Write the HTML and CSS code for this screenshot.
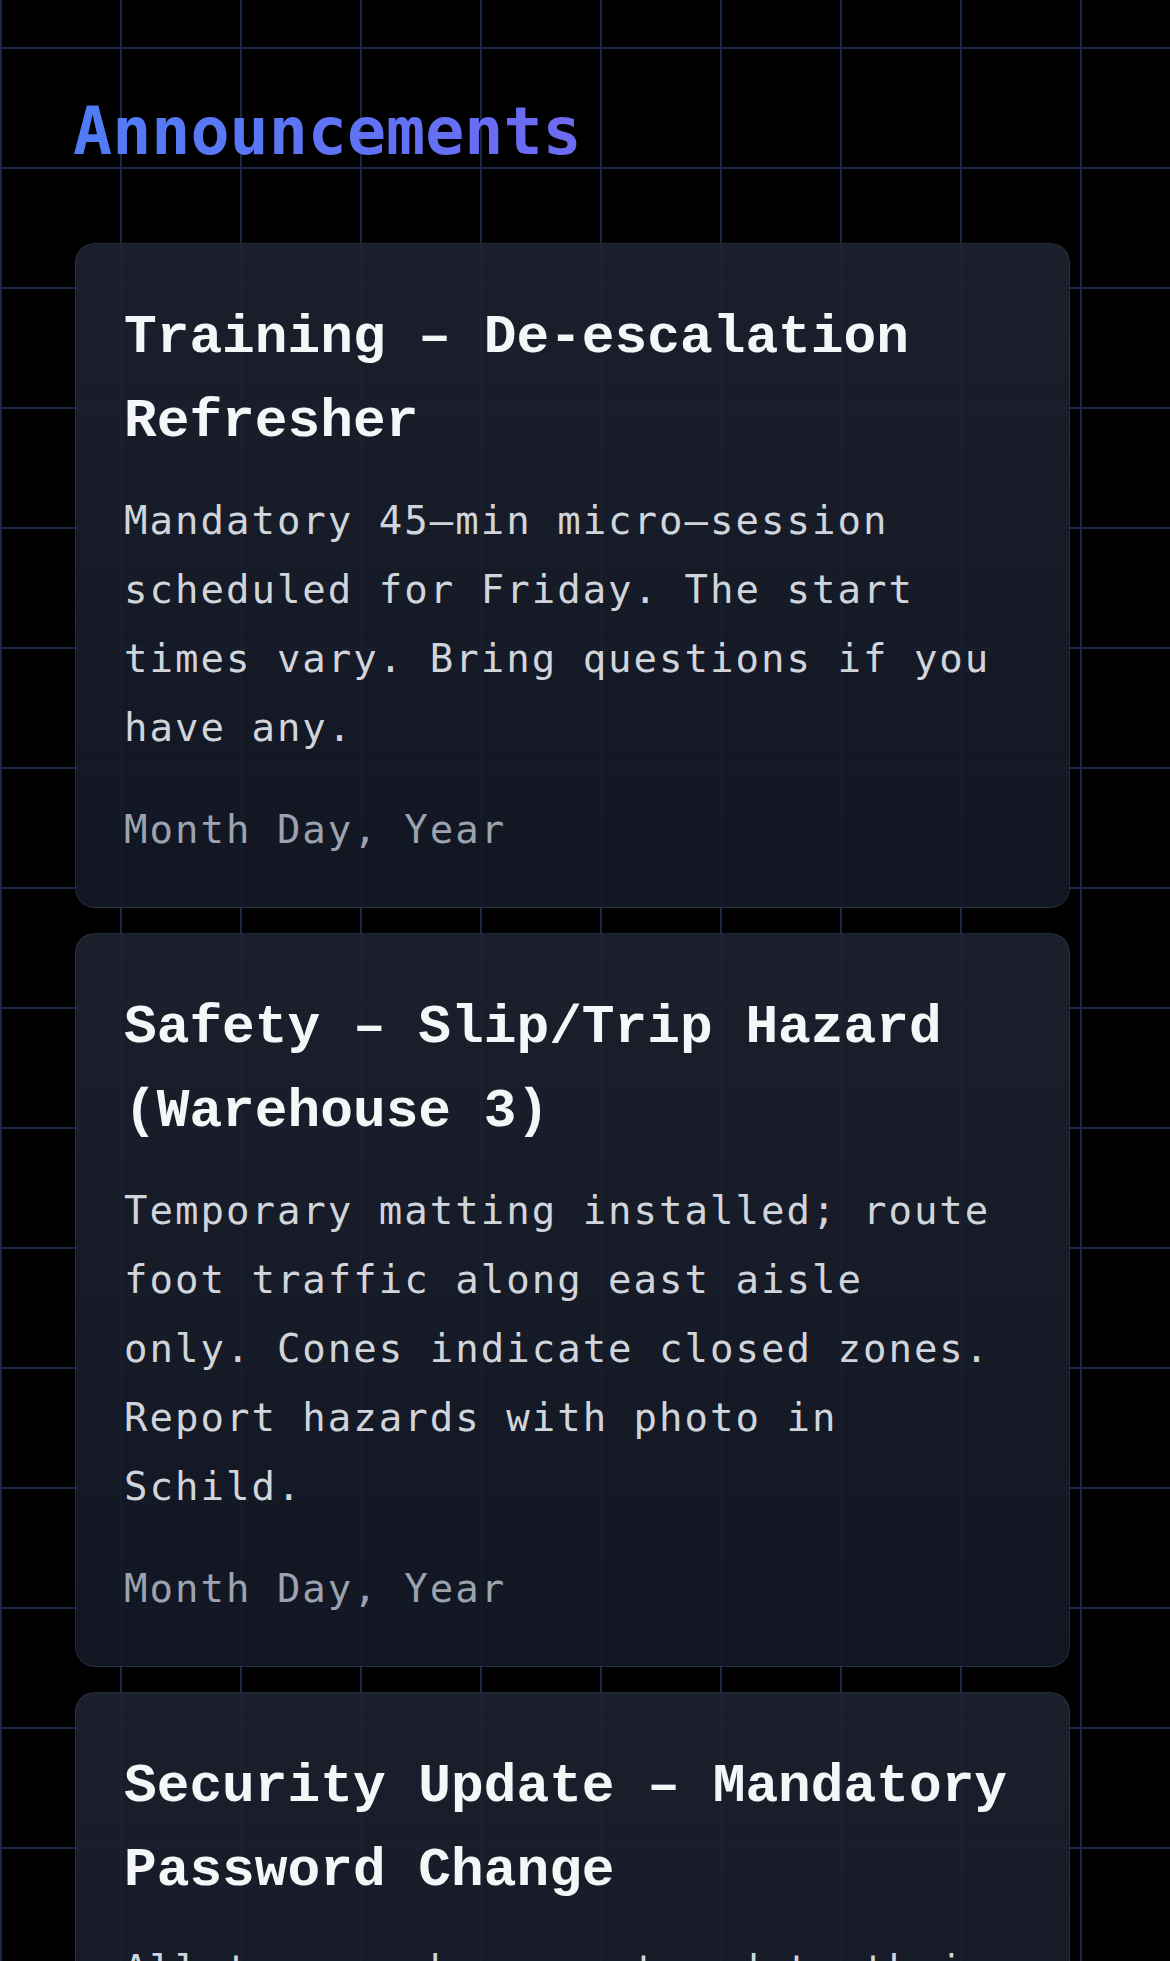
FILE: index.html
```html
<!DOCTYPE html>
<html lang="en">
<head>
<meta charset="utf-8">
<title>Announcements</title>
<link rel="stylesheet" href="styles.css">
</head>
<body>
<main class="page">
  <h1 class="page-title">Announcements</h1>
  <section class="cards">
    <article class="card">
      <h2 class="card-title">Training – De-escalation Refresher</h2>
      <p class="card-body">Mandatory 45–min micro–session scheduled for Friday. The start times vary. Bring questions if you have any.</p>
      <p class="card-date">Month Day, Year</p>
    </article>
    <article class="card">
      <h2 class="card-title">Safety – Slip/Trip Hazard (Warehouse 3)</h2>
      <p class="card-body">Temporary matting installed; route foot traffic along east aisle only. Cones indicate closed zones. Report hazards with photo in Schild.</p>
      <p class="card-date">Month Day, Year</p>
    </article>
    <article class="card">
      <h2 class="card-title">Security Update – Mandatory Password Change</h2>
      <p class="card-body">All team members must update their passwords by the end of the week using the new policy.</p>
      <p class="card-date">Month Day, Year</p>
    </article>
  </section>
</main>
</body>
</html>
```
FILE: styles.css
```css
html, body {
  margin: 0;
  padding: 0;
}

body {
  background-color: #000;
  background-image:
    linear-gradient(to right, #1a2744 0, #1a2744 2px, transparent 2px),
    linear-gradient(to bottom, #1a2744 0, #1a2744 2px, transparent 2px);
  background-size: 120px 120px;
  background-position: 0 47px;
  min-height: 1961px;
  font-family: "DejaVu Sans Mono", monospace;
  color: #d1d5db;
}

.page {
  padding: 94px 100px 0 75px;
}

.page-title {
  display: inline-block;
  margin: 0 0 73px -2px;
  font-family: "DejaVu Sans Mono", monospace;
  font-size: 65px;
  font-weight: 700;
  line-height: 76px;
  background: linear-gradient(90deg, #4f7df6, #6d6af2);
  -webkit-background-clip: text;
  background-clip: text;
  color: transparent;
}

.cards {
  display: flex;
  flex-direction: column;
  gap: 25px;
}

.card {
  border: 1px solid rgba(148, 163, 184, 0.14);
  border-radius: 20px;
  background: linear-gradient(180deg, rgba(29, 35, 48, 0.9), rgba(19, 25, 38, 0.9));
  padding: 52px 57px 43px 48px;
}

.card-title {
  margin: 0 0 22px;
  font-family: "Liberation Mono", monospace;
  font-size: 54.5px;
  font-weight: 700;
  line-height: 84px;
  color: #f5f6f8;
}

.card-body {
  margin: 0;
  font-size: 39px;
  line-height: 69px;
  letter-spacing: 2px;
  color: #d1d5db;
}

.card-date {
  margin: 33px 0 0;
  font-size: 39px;
  line-height: 69px;
  letter-spacing: 2px;
  color: #9ca3af;
}
```
